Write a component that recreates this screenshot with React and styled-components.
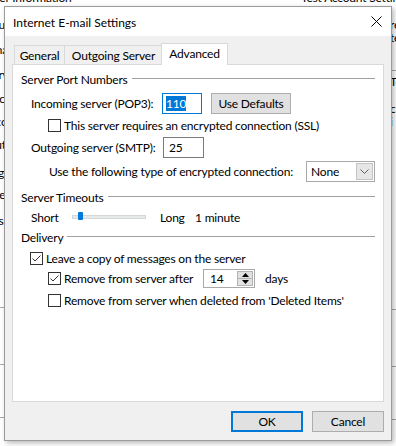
import React from 'react'
import styled, { createGlobalStyle } from 'styled-components'

const GlobalStyle = createGlobalStyle`
  html, body {
    margin: 0;
    padding: 0;
  }
  body {
    width: 396px;
    height: 446px;
    overflow: hidden;
    background: #ffffff;
    font-family: Lato, "Noto Sans", sans-serif;
    font-size: 12px;
    letter-spacing: -0.2px;
    color: #000;
  }
`;

const Desktop = styled.div`
  position: relative;
  width: 396px;
  height: 446px;
  overflow: hidden;
  background: #ffffff;
`;

/* the Outlook account window lying behind the dialog */
const BackWindow = styled.div`
  position: absolute;
  left: -14px;
  top: -9px;
  width: 424px;
  height: 470px;
  display: flex;
  flex-direction: column;
`;

const BackHeader = styled.div`
  display: flex;
  justify-content: space-between;
  height: 14px;
  line-height: 14px;
  white-space: nowrap;
`;

const BackBody = styled.div`
  flex: 1;
  display: flex;
  justify-content: space-between;
`;

const BackCol = styled.div`
  display: flex;
  flex-direction: column;
  width: ${p => p.$w}px;
  overflow: hidden;
  direction: ${p => (p.$right ? 'rtl' : 'ltr')};
`;

const BackLine = styled.div`
  margin-top: ${p => p.$mt}px;
  height: 14px;
  line-height: 14px;
  white-space: nowrap;
  direction: ltr;
  color: ${p => (p.$red ? '#b02020' : '#000')};
`;

const BackRule = styled.div`
  margin-top: ${p => p.$mt}px;
  height: 1px;
  background: #a9a9a9;
`;

const Dialog = styled.div`
  position: absolute;
  left: 4px;
  top: 6px;
  width: 388px;
  height: 435px;
  box-sizing: border-box;
  border: 1px solid #9b9b9b;
  background: #f0f0f0;
  box-shadow: 2px 2px 5px rgba(0, 0, 0, 0.28);
  display: flex;
  flex-direction: column;
`;

const TitleBar = styled.div`
  height: 29px;
  background: #ffffff;
  display: flex;
  align-items: center;
  justify-content: space-between;
  padding: 0 9px 0 8px;
  flex: none;
`;

const Title = styled.span`
  font-size: 12px;
  letter-spacing: 0;
  padding-top: 1px;
`;

const Body = styled.div`
  flex: 1;
  display: flex;
  flex-direction: column;
  padding: 7px 7px 0 7px;
`;

const TabRow = styled.div`
  display: flex;
  align-items: flex-end;
  padding-left: 2px;
  position: relative;
  z-index: 2;
`;

const Tab = styled.div`
  box-sizing: border-box;
  width: ${p => p.$w}px;
  height: ${p => (p.$active ? 22 : 19)}px;
  margin-left: ${p => (p.$active ? -2 : p.$first ? 0 : -1)}px;
  margin-bottom: ${p => (p.$active ? -1 : 0)}px;
  border: 1px solid #d9d9d9;
  border-bottom: none;
  background: ${p => (p.$active ? '#ffffff' : '#f0f0f0')};
  display: flex;
  align-items: center;
  justify-content: center;
  padding-bottom: ${p => (p.$active ? 2 : 0)}px;
  position: relative;
  z-index: ${p => (p.$active ? 2 : 1)};
`;

const Panel = styled.div`
  box-sizing: border-box;
  height: 338px;
  border: 1px solid #d9d9d9;
  background: #ffffff;
  padding: 7px 8px 0 8px;
  display: flex;
  flex-direction: column;
  position: relative;
  z-index: 1;
`;

const GroupHead = styled.div`
  display: flex;
  align-items: center;
  gap: 4px;
  height: 14px;
  margin-top: ${p => p.$mt || 0}px;
`;

const Rule = styled.div`
  flex: 1;
  height: 1px;
  background: #a0a0a0;
  margin-top: -1px;
`;

const Row = styled.div`
  display: flex;
  align-items: center;
  height: ${p => p.$h || 14}px;
  margin-top: ${p => p.$mt}px;
  padding-left: ${p => p.$indent}px;
  white-space: nowrap;
`;

const Label = styled.span`
  width: ${p => (p.$w ? `${p.$w}px` : 'auto')};
  flex: none;
  margin-left: ${p => p.$ml || 0}px;
`;

const TextBox = styled.div`
  box-sizing: border-box;
  width: ${p => p.$w}px;
  height: 21px;
  border: 1px solid ${p => (p.$focus ? '#0078d7' : '#7a7a7a')};
  background: #fff;
  display: flex;
  align-items: center;
  padding-left: ${p => p.$pad}px;
  flex: none;
`;

const Selected = styled.span`
  background: #0078d7;
  color: #fff;
  line-height: 15px;
`;

const Button = styled.div`
  box-sizing: border-box;
  width: ${p => p.$w}px;
  height: ${p => p.$h || 21}px;
  margin-left: ${p => p.$ml || 0}px;
  background: #e1e1e1;
  border: ${p => (p.$default ? '2px solid #0078d7' : '1px solid #adadad')};
  display: flex;
  align-items: center;
  justify-content: center;
  flex: none;
`;

const Box = styled.span`
  box-sizing: border-box;
  width: 13px;
  height: 13px;
  border: 1px solid #333;
  background: #fff;
  display: inline-flex;
  align-items: center;
  justify-content: center;
  flex: none;
  margin-right: 3px;
`;

const Combo = styled.div`
  box-sizing: border-box;
  width: 69px;
  height: 21px;
  border: 1px solid #a9a9a9;
  background: #fff;
  display: flex;
  align-items: stretch;
  padding: 1px;
  flex: none;
`;

const ComboValue = styled.span`
  flex: 1;
  display: flex;
  align-items: center;
  padding-left: 3px;
`;

const DropButton = styled.span`
  box-sizing: border-box;
  width: 17px;
  background: #e6e6e6;
  border: 1px solid #c4c4c4;
  display: flex;
  align-items: center;
  justify-content: center;
`;

const Track = styled.div`
  position: relative;
  box-sizing: border-box;
  width: 74px;
  height: 4px;
  background: #e7eaea;
  border: 1px solid #d6d6d6;
  flex: none;
`;

const Thumb = styled.span`
  position: absolute;
  left: 5px;
  top: -4px;
  width: 5px;
  height: 8px;
  background: #0078d7;
  border-radius: 1px;
`;

const Spinner = styled.div`
  box-sizing: border-box;
  width: 52px;
  height: 19px;
  border: 1px solid #a9a9a9;
  background: #fff;
  display: flex;
  padding: 0 1px 0 0;
  flex: none;
`;

const SpinValue = styled.span`
  flex: 1;
  display: flex;
  align-items: center;
  padding-left: 6px;
`;

const SpinCol = styled.span`
  width: 16px;
  display: flex;
  flex-direction: column;
  padding: 1px 0;
`;

const SpinHalf = styled.span`
  flex: 1;
  box-sizing: border-box;
  background: #e1e1e1;
  border: 1px solid #b4b4b4;
  margin-top: ${p => (p.$down ? -1 : 0)}px;
  display: flex;
  align-items: center;
  justify-content: center;
`;

const Footer = styled.div`
  display: flex;
  justify-content: flex-end;
  margin-top: 9px;
`;

function CheckBox({ checked }) {
  return (
    <Box>
      {checked && (
        <svg width="11" height="11" viewBox="0 0 11 11">
          <path d="M1.5 5.5 L4 8 L9.5 2.5" fill="none" stroke="#333" strokeWidth="1" />
        </svg>
      )}
    </Box>
  )
}

function CloseIcon() {
  return (
    <svg width="11" height="11" viewBox="0 0 11 11">
      <path d="M0.5 0.5 L10.5 10.5 M10.5 0.5 L0.5 10.5" stroke="#000" strokeWidth="1" />
    </svg>
  )
}

function Chevron() {
  return (
    <svg width="9" height="5" viewBox="0 0 9 5">
      <path d="M0.5 0.5 L4.5 4.5 L8.5 0.5" fill="none" stroke="#606060" strokeWidth="1" />
    </svg>
  )
}

function Arrow({ down }) {
  return (
    <svg width="7" height="4" viewBox="0 0 7 4">
      <path d={down ? 'M0 0 L7 0 L3.5 4 Z' : 'M0 4 L7 4 L3.5 0 Z'} fill="#000" />
    </svg>
  )
}

const backLeft = [
  ['Your Name:', 13],
  ['Email Address:', 11],
  ['Server Information', 11],
  ['Account Type:', 10],
  ['Incoming mail server:', 9],
  ['Outgoing mail server (SMTP):', 9],
  ['Logon Information', 14],
  ['User Name:', 8],
  ['Password:', 12],
];

export default function App() {
  return (
    <Desktop>
      <GlobalStyle />
      <BackWindow>
        <BackHeader>
          <span>User Information</span>
          <span>Test Account Settings</span>
        </BackHeader>
        <BackBody>
          <BackCol $w={19}>
            {backLeft.map(([t, mt]) => (
              <BackLine key={t} $mt={mt}>{t}</BackLine>
            ))}
            <BackLine $mt={37} $red>*</BackLine>
            <BackRule $mt={28} />
            <BackRule $mt={56} />
            <BackRule $mt={52} />
          </BackCol>
          <BackCol $w={20} $right>
            <BackLine $mt={13}>recommend</BackLine>
            <BackLine $mt={-1}>tests</BackLine>
            <BackRule $mt={25} />
            <BackLine $mt={4}>Too</BackLine>
            <BackLine $mt={13}>clic</BackLine>
            <BackLine $mt={-1}>i</BackLine>
            <BackRule $mt={180} />
            <BackRule $mt={56} />
            <BackRule $mt={52} />
          </BackCol>
        </BackBody>
      </BackWindow>

      <Dialog>
        <TitleBar>
          <Title>Internet E-mail Settings</Title>
          <CloseIcon />
        </TitleBar>
        <Body>
          <TabRow>
            <Tab $w={51} $first>General</Tab>
            <Tab $w={99}>Outgoing Server</Tab>
            <Tab $w={67} $active>Advanced</Tab>
          </TabRow>
          <Panel>
            <GroupHead>
              <span>Server Port Numbers</span>
              <Rule />
            </GroupHead>
            <Row $h={21} $mt={7} $indent={10}>
              <Label $w={131}>Incoming server (POP3):</Label>
              <TextBox $w={40} $pad={3} $focus>
                <Selected>110</Selected>
              </TextBox>
              <Button $w={80} $ml={9}>Use Defaults</Button>
            </Row>
            <Row $mt={4} $indent={27}>
              <CheckBox />
              <Label>This server requires an encrypted connection (SSL)</Label>
            </Row>
            <Row $h={21} $mt={5} $indent={10}>
              <Label $w={132}>Outgoing server (SMTP):</Label>
              <TextBox $w={41} $pad={5}>25</TextBox>
            </Row>
            <Row $h={21} $mt={3} $indent={28}>
              <Label $w={257}>Use the following type of encrypted connection:</Label>
              <Combo>
                <ComboValue>None</ComboValue>
                <DropButton>
                  <Chevron />
                </DropButton>
              </Combo>
            </Row>

            <GroupHead $mt={8}>
              <span>Server Timeouts</span>
              <Rule />
            </GroupHead>
            <Row $mt={6} $indent={10}>
              <Label $w={41}>Short</Label>
              <Track>
                <Thumb />
              </Track>
              <Label $w={35} $ml={14}>Long</Label>
              <Label>1 minute</Label>
            </Row>

            <GroupHead $mt={6}>
              <span>Delivery</span>
              <Rule />
            </GroupHead>
            <Row $mt={7} $indent={9}>
              <CheckBox checked />
              <Label>Leave a copy of messages on the server</Label>
            </Row>
            <Row $h={19} $mt={4} $indent={27}>
              <CheckBox checked />
              <Label $w={139}>Remove from server after</Label>
              <Spinner>
                <SpinValue>14</SpinValue>
                <SpinCol>
                  <SpinHalf>
                    <Arrow />
                  </SpinHalf>
                  <SpinHalf $down>
                    <Arrow down />
                  </SpinHalf>
                </SpinCol>
              </Spinner>
              <Label $ml={10}>days</Label>
            </Row>
            <Row $mt={5} $indent={27}>
              <CheckBox />
              <Label>Remove from server when deleted from 'Deleted Items'</Label>
            </Row>
          </Panel>
          <Footer>
            <Button $w={72} $default>OK</Button>
            <Button $w={72} $ml={9}>Cancel</Button>
          </Footer>
        </Body>
      </Dialog>
    </Desktop>
  )
}
